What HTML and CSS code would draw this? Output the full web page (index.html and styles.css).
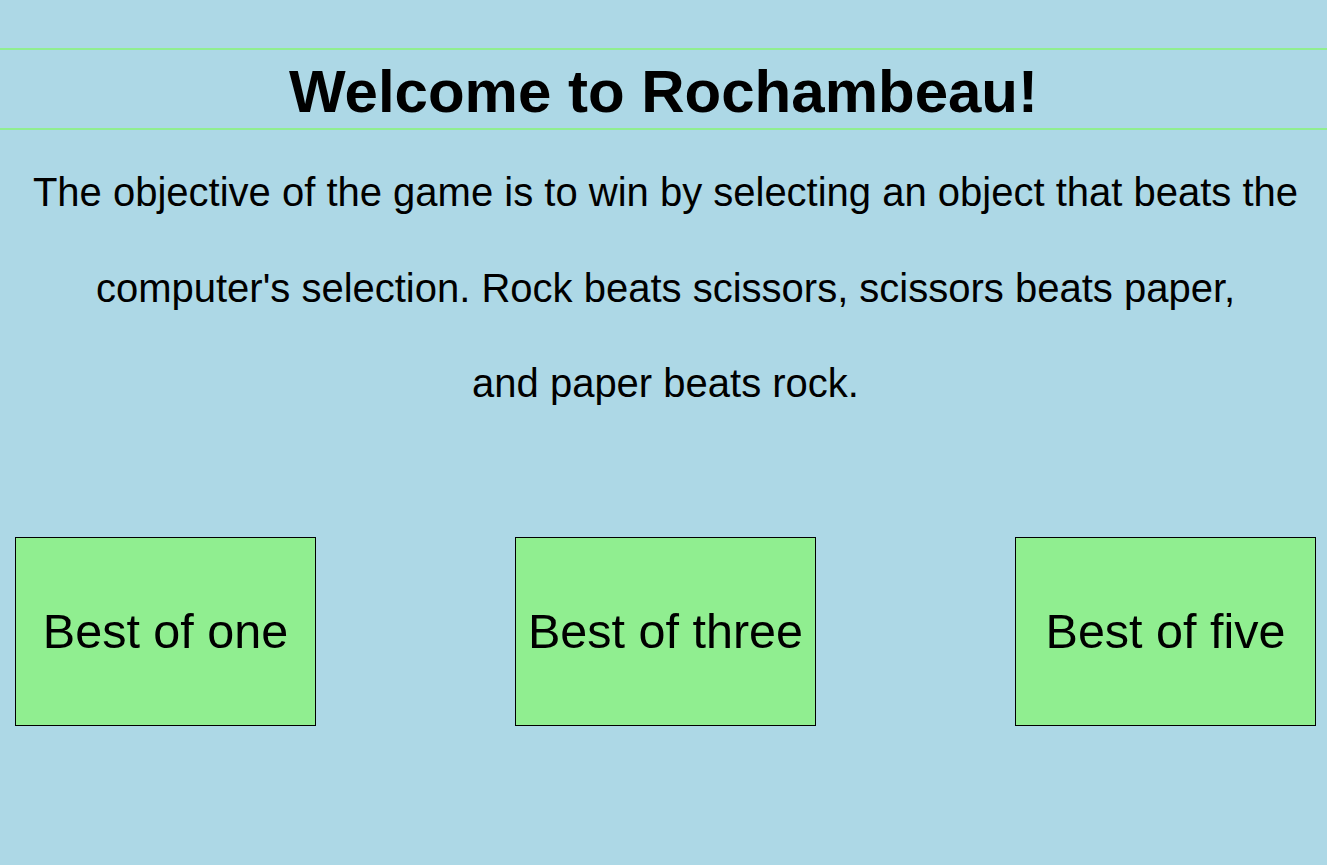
FILE: index.html
```html
<!DOCTYPE html>
<html lang="en">
<head>
<meta charset="utf-8">
<title>Rochambeau</title>
<link rel="stylesheet" href="styles.css">
</head>
<body>
<header class="header">
  <h1 class="title">Welcome to Rochambeau!</h1>
</header>
<p class="intro">The objective of the game is to win by selecting an object that beats the computer's selection. Rock beats scissors, scissors beats paper,<br>and paper beats rock.</p>
<div class="modes">
  <button class="mode">Best of one</button>
  <button class="mode">Best of three</button>
  <button class="mode">Best of five</button>
</div>
</body>
</html>
```

FILE: styles.css
```css
html, body {
  margin: 0;
  padding: 0;
  background: #add8e6;
}
body {
  font-family: "Liberation Sans", Arial, sans-serif;
  color: #000;
  padding-top: 48px;
  min-height: 817px;
}
.header {
  border-top: 2px solid #90ee90;
  border-bottom: 2px solid #90ee90;
  padding: 7px 0 2px;
}
.title {
  margin: 0;
  font-size: 60px;
  line-height: 69px;
  font-weight: bold;
  text-align: center;
}
.intro {
  margin: 15px 0 0;
  padding-left: 4px;
  font-size: 40px;
  line-height: 95.5px;
  text-align: center;
}
.modes {
  display: flex;
  gap: 199px;
  padding-left: 15px;
  margin-top: 105px;
}
.mode {
  width: 301px;
  height: 189px;
  box-sizing: border-box;
  background: #90ee90;
  border: 1px solid #000;
  border-radius: 0;
  font-family: "Liberation Sans", Arial, sans-serif;
  font-size: 48.5px;
  color: #000;
  padding: 0;
  display: flex;
  align-items: center;
  justify-content: center;
}
```
